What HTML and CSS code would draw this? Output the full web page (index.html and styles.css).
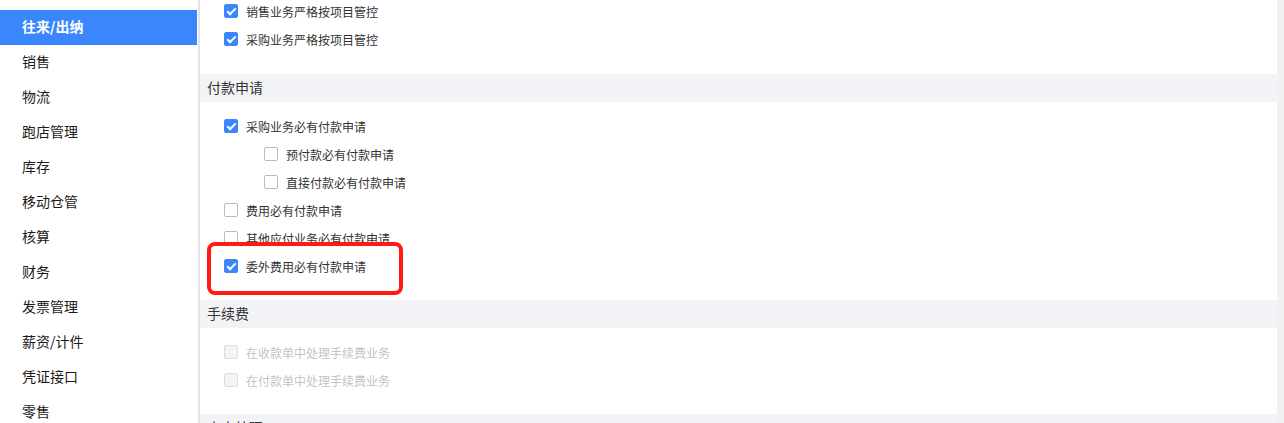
FILE: index.html
```html
<!DOCTYPE html>
<html lang="zh-CN">
<head>
    <meta charset="UTF-8">
    <title>参数设置</title>
    <link rel="stylesheet" href="styles.css">
</head>
<body>
    <div class="layout">
        <ul class="side-menu">
            <li class="active">往来/出纳</li>
            <li>销售</li>
            <li>物流</li>
            <li>跑店管理</li>
            <li>库存</li>
            <li>移动仓管</li>
            <li>核算</li>
            <li>财务</li>
            <li>发票管理</li>
            <li>薪资/计件</li>
            <li>凭证接口</li>
            <li>零售</li>
        </ul>

        <div class="content">
            <div class="section first">
                <label class="row"><span class="box checked"></span>销售业务严格按项目管控</label>
                <label class="row"><span class="box checked"></span>采购业务严格按项目管控</label>
            </div>

            <div class="section-title">付款申请</div>
            <div class="section">
                <label class="row"><span class="box checked"></span>采购业务必有付款申请</label>
                <label class="row sub"><span class="box"></span>预付款必有付款申请</label>
                <label class="row sub"><span class="box"></span>直接付款必有付款申请</label>
                <label class="row"><span class="box"></span>费用必有付款申请</label>
                <label class="row"><span class="box"></span>其他应付业务必有付款申请</label>
                <label class="row marked"><span class="box checked"></span>委外费用必有付款申请<span class="mark"></span></label>
            </div>

            <div class="section-title">手续费</div>
            <div class="section">
                <label class="row disabled"><span class="box"></span>在收款单中处理手续费业务</label>
                <label class="row disabled"><span class="box"></span>在付款单中处理手续费业务</label>
            </div>

            <div class="section-title">未来处理</div>
        </div>

        <div class="scrollbar"></div>
    </div>
</body>
</html>
```

FILE: styles.css
```css
/* Basic styling */
html, body { margin: 0; height: 100%; overflow: hidden; }
body { font-family: "Noto Sans CJK SC", "Noto Sans", sans-serif; color: #222; background: #fff; }

.layout { display: flex; height: 423px; }

/* left menu */
.side-menu { list-style: none; margin: 0; padding: 10px 0 0; width: 198px; flex: none; border-right: 2px solid #e4e4e4; }
.side-menu li { height: 33px; line-height: 33px; padding: 0 0 2px 22px; font-size: 14px; color: #1a1a1a; }
.side-menu li.active { background: #3a87fd; color: #fff; font-weight: bold; margin-right: 1px; }

/* right content */
.content { flex: 1; overflow: hidden; }
.section { padding: 10px 0 20px; }
.section.first { margin-top: -3px; padding-top: 0; padding-bottom: 21px; }
.section-title { height: 27px; line-height: 27px; padding: 0 0 1px 7px; background: #f2f3f7; font-size: 14px; color: #333; }

.row { display: flex; align-items: center; height: 28px; padding-left: 24px; font-size: 12px; color: #333; position: relative; }
.row.sub { padding-left: 64px; }
.row.disabled { color: #c2c4c9; }

.box { width: 12px; height: 12px; border: 1px solid #b9b9b9; border-radius: 2px; background: #fff; margin-right: 8px; flex: none; position: relative; }
.box.checked { background: #3a87fd; border-color: #3a87fd; }
.box.checked::after { content: ""; position: absolute; left: 4px; top: 1px; width: 3px; height: 7px; border: solid #fff; border-width: 0 2px 2px 0; transform: rotate(45deg); }
.row.disabled .box { background: #f4f4f5; border-color: #dcdde0; }

/* red annotation frame */
.mark { position: absolute; left: 7px; top: -10px; width: 188px; height: 45px; border: 4px solid #ff1a12; border-radius: 8px; }

.scrollbar { width: 7px; flex: none; background: #f1f1f1; }
```
